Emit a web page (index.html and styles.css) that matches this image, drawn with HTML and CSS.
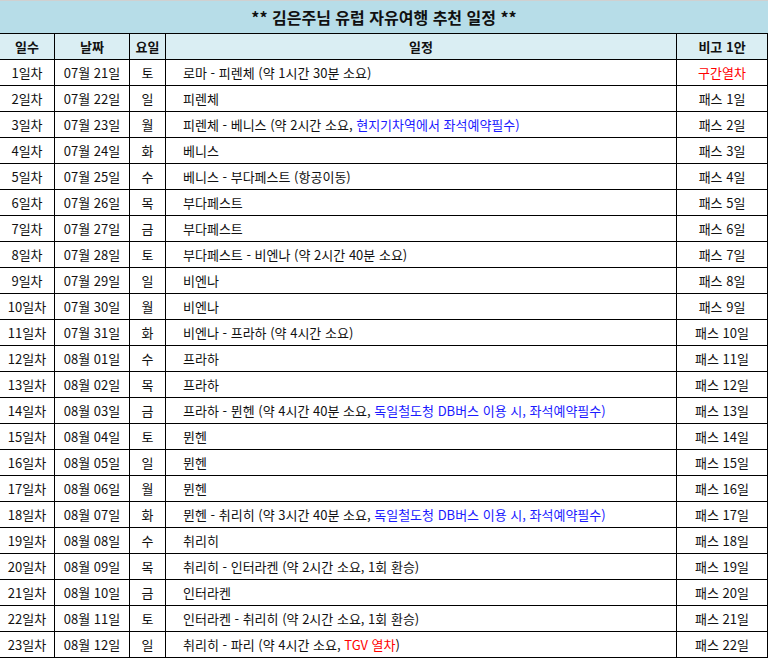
FILE: index.html
```html
<!DOCTYPE html>
<html lang="ko">
<head>
<meta charset="utf-8">
<title>김은주님 유럽 자유여행 추천 일정</title>
<link rel="stylesheet" href="styles.css">
</head>
<body>
<table class="plan">
  <colgroup>
    <col class="c-day"><col class="c-date"><col class="c-wd"><col class="c-route"><col class="c-note">
  </colgroup>
  <thead>
    <tr><td class="title" colspan="5">** 김은주님 유럽 자유여행 추천 일정 **</td></tr>
    <tr class="head">
      <th>일수</th><th>날짜</th><th>요일</th><th>일정</th><th class="last">비고 1안</th>
    </tr>
  </thead>
  <tbody>
    <tr><td>1일차</td><td>07월 21일</td><td>토</td><td class="route">로마 - 피렌체 (약 1시간 30분 소요)</td><td class="last red">구간열차</td></tr>
    <tr><td>2일차</td><td>07월 22일</td><td>일</td><td class="route">피렌체</td><td class="last">패스 1일</td></tr>
    <tr><td>3일차</td><td>07월 23일</td><td>월</td><td class="route">피렌체 - 베니스 (약 2시간 소요, <span class="blue">현지기차역에서 좌석예약필수)</span></td><td class="last">패스 2일</td></tr>
    <tr><td>4일차</td><td>07월 24일</td><td>화</td><td class="route">베니스</td><td class="last">패스 3일</td></tr>
    <tr><td>5일차</td><td>07월 25일</td><td>수</td><td class="route">베니스 - 부다페스트 (항공이동)</td><td class="last">패스 4일</td></tr>
    <tr><td>6일차</td><td>07월 26일</td><td>목</td><td class="route">부다페스트</td><td class="last">패스 5일</td></tr>
    <tr><td>7일차</td><td>07월 27일</td><td>금</td><td class="route">부다페스트</td><td class="last">패스 6일</td></tr>
    <tr><td>8일차</td><td>07월 28일</td><td>토</td><td class="route">부다페스트 - 비엔나 (약 2시간 40분 소요)</td><td class="last">패스 7일</td></tr>
    <tr><td>9일차</td><td>07월 29일</td><td>일</td><td class="route">비엔나</td><td class="last">패스 8일</td></tr>
    <tr><td>10일차</td><td>07월 30일</td><td>월</td><td class="route">비엔나</td><td class="last">패스 9일</td></tr>
    <tr><td>11일차</td><td>07월 31일</td><td>화</td><td class="route">비엔나 - 프라하 (약 4시간 소요)</td><td class="last">패스 10일</td></tr>
    <tr><td>12일차</td><td>08월 01일</td><td>수</td><td class="route">프라하</td><td class="last">패스 11일</td></tr>
    <tr><td>13일차</td><td>08월 02일</td><td>목</td><td class="route">프라하</td><td class="last">패스 12일</td></tr>
    <tr><td>14일차</td><td>08월 03일</td><td>금</td><td class="route">프라하 - 뮌헨 (약 4시간 40분 소요, <span class="blue">독일철도청 DB버스 이용 시, 좌석예약필수)</span></td><td class="last">패스 13일</td></tr>
    <tr><td>15일차</td><td>08월 04일</td><td>토</td><td class="route">뮌헨</td><td class="last">패스 14일</td></tr>
    <tr><td>16일차</td><td>08월 05일</td><td>일</td><td class="route">뮌헨</td><td class="last">패스 15일</td></tr>
    <tr><td>17일차</td><td>08월 06일</td><td>월</td><td class="route">뮌헨</td><td class="last">패스 16일</td></tr>
    <tr><td>18일차</td><td>08월 07일</td><td>화</td><td class="route">뮌헨 - 취리히 (약 3시간 40분 소요, <span class="blue">독일철도청 DB버스 이용 시, 좌석예약필수)</span></td><td class="last">패스 17일</td></tr>
    <tr><td>19일차</td><td>08월 08일</td><td>수</td><td class="route">취리히</td><td class="last">패스 18일</td></tr>
    <tr><td>20일차</td><td>08월 09일</td><td>목</td><td class="route">취리히 - 인터라켄 (약 2시간 소요, 1회 환승)</td><td class="last">패스 19일</td></tr>
    <tr><td>21일차</td><td>08월 10일</td><td>금</td><td class="route">인터라켄</td><td class="last">패스 20일</td></tr>
    <tr><td>22일차</td><td>08월 11일</td><td>토</td><td class="route">인터라켄 - 취리히 (약 2시간 소요, 1회 환승)</td><td class="last">패스 21일</td></tr>
    <tr><td>23일차</td><td>08월 12일</td><td>일</td><td class="route">취리히 - 파리 (약 4시간 소요, <span class="red">TGV 열차</span>)</td><td class="last">패스 22일</td></tr>
  </tbody>
</table>
</body>
</html>
```

FILE: styles.css
```css
html, body {
  margin: 0;
  padding: 0;
  background: #ffffff;
}

.plan {
  width: 768px;
  table-layout: fixed;
  border-collapse: separate;
  border-spacing: 0;
  font-family: "Noto Sans CJK KR", "Noto Sans", sans-serif;
  font-size: 13px;
  color: #111111;
}

.c-day { width: 55px; }
.c-date { width: 75px; }
.c-wd { width: 36px; }
.c-route { width: 511px; }
.c-note { width: 91px; }

.plan td,
.plan th {
  box-sizing: border-box;
  height: 26px;
  padding: 0;
  text-align: center;
  vertical-align: middle;
  border-right: 1px solid #000000;
  border-bottom: 1px solid #000000;
  white-space: nowrap;
  line-height: 16px;
}

.plan .title {
  height: 34px;
  background: #b7dde8;
  border-top: 1px solid #d0d0d0;
  border-right: none;
  font-size: 16px;
  font-weight: bold;
  color: #111111;
}

.head th {
  background: #daeef3;
  font-weight: bold;
  color: #111111;
}

.plan .route {
  text-align: left;
  padding-left: 17px;
}

.red { color: #ff0000; }
.blue { color: #1a1aff; }
```
